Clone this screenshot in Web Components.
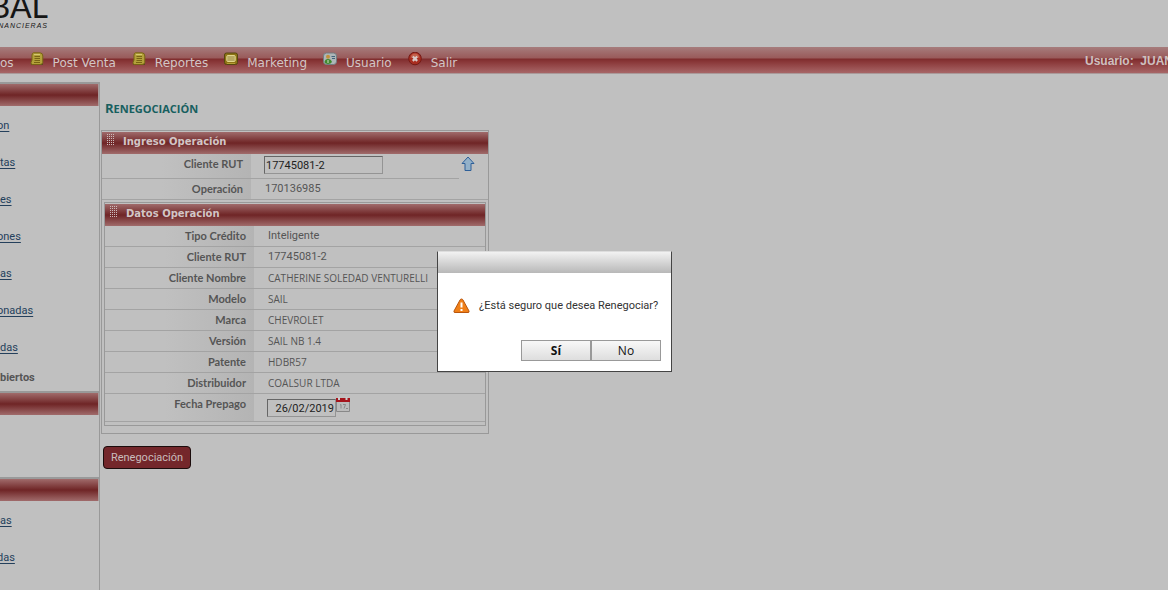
<!DOCTYPE html>
<html lang="es"><head><meta charset="utf-8"><title>Renegociación</title>
<style>
html,body{margin:0;height:100%}
body{background:#c0c0c0;font:11px/16px Roboto,sans-serif;color:#555;overflow:hidden}
</style></head><body>
<credit-app></credit-app>
<script>
const define=(name,html)=>customElements.define(name,class extends HTMLElement{
  connectedCallback(){
    if(this.shadowRoot)return;
    const root=this.attachShadow({mode:'open'});
    root.innerHTML=typeof html==='function'?html(this):html;
  }
});

const icons={
  note:`<rect x="1" y="10" width="12" height="3" rx="1" fill="#4b4520"/><path d="M3.500 .8H10Q12.800 1 12.800 4V10.500Q12.500 12.500 10 12.500H2.500Q.6 12.500 1 10.500L2 8V3Q2.200 1 3.500 .8Z" fill="#b3a13a" stroke="#786414"/><path d="M4.500 4.500H10M4.500 6.500H10M4.500 8.500H10M4 10.500H10" stroke="#786414"/><path d="M4 2.500H10" stroke="#d5c971"/>`,
  screen:`<rect x=".5" y="1" width="13" height="11.500" rx="2" fill="#8d7414" stroke="#564610"/><rect x="2.800" y="3.500" width="8.400" height="6" rx="1" fill="#b7a860" stroke="#e1d58d"/><path d="M3 11.500H11" stroke="#b59e34"/>`,
  user:`<rect x=".5" y="1" width="13" height="11.500" rx="3" fill="#aeb6b8" stroke="#737d80"/><circle cx="5" cy="4.800" r="2" fill="#c2913c"/><path d="M1.500 10Q2 7 5 7T9 10Q8 12 5 12T1.500 10Z" fill="#3f8a2d"/><path d="M8.500 4.500H12M9 6.500H12" stroke="#40627a"/><path d="M5 8V11" stroke="#d4dccd"/>`,
  exit:`<circle cx="7" cy="6.500" r="6.300" fill="#a92d20" stroke="#741b16"/><path d="M2.500 6Q3 1.500 7 1.500T11.500 6Q7 4 2.500 6Z" fill="#c4614c"/><path d="M4.800 4.500L9.200 8.900M9.200 4.500L4.800 8.900" stroke="#d9c9c7" stroke-width="2.200"/>`
};
define('nav-item',e=>`<style>
:host{display:flex;gap:9px;height:26px}
svg{width:14px;height:14px;margin-top:5px;flex:none}
a{color:#d2c6c6;text-decoration:none;font:12px/32px "DejaVu Sans",sans-serif;white-space:nowrap}
</style>${e.hasAttribute('icon')?`<svg viewBox="0 0 14 14" aria-hidden="true">${icons[e.getAttribute('icon')]}</svg>`:''}<a href="#"><slot></slot></a>`);

define('menu-bar',`<style>
:host{display:flex;justify-content:space-between;height:26px;border-bottom:1px solid #a99;background:linear-gradient(#a67c7c 0,#995a5a 11px,#7f2c2d 12px,#8d3c3d 16px,#a76667 26px);overflow:hidden}
nav{display:flex;gap:16px}
.who{width:83px;flex:none;white-space:pre;font:bold 12px/28px "Liberation Sans",sans-serif;color:#cdc0c0;overflow:hidden}
</style><nav><nav-item>os</nav-item><nav-item icon="note">Post Venta</nav-item><nav-item icon="note">Reportes</nav-item><nav-item icon="screen">Marketing</nav-item><nav-item icon="user">Usuario</nav-item><nav-item icon="exit">Salir</nav-item></nav><div class="who">Usuario:  JUAN</div>`);

define('brand-logo',`<style>
:host{display:flex;flex-direction:column;align-items:flex-end;width:48px;height:47px;overflow:hidden;color:#161616}
b{font:32px/32px Lato,sans-serif;margin-top:-10px}
span{font:italic 7px/8px "Liberation Sans",sans-serif;letter-spacing:1px}
</style><b>BAL</b><span>NANCIERAS</span>`);

define('side-panel',`<style>
:host{display:block;box-sizing:border-box;border-top:2px solid #999;border-right:1px solid #999}
header{height:22px;border-right:1px solid #a99;background:linear-gradient(#a06b6b,#6f2526 50%,#a06b6b)}
.body{display:flex;flex-direction:column;padding-top:12px}
</style><header></header><div class="body"><slot></slot></div>`);
define('side-link',`<style>
:host{display:block;height:37px}
:host([clipped]){text-indent:-3px}
a{color:#24405c;text-underline-offset:2px}
</style><a href="#"><slot></slot></a>`);

define('side-bar',`<style>
:host{display:flex;flex-direction:column;width:100px;flex:none;overflow:hidden}
.a{height:309px}.b{height:86px}.c{flex:1}
strong{margin-top:-7px}
</style>
<side-panel class="a"><side-link clipped>on</side-link><side-link>tas</side-link><side-link>es</side-link><side-link clipped>ones</side-link><side-link>as</side-link><side-link clipped>onadas</side-link><side-link>das</side-link><strong>biertos</strong></side-panel>
<side-panel class="b"></side-panel>
<side-panel class="c"><side-link>as</side-link><side-link clipped>das</side-link></side-panel>`);

define('section-head',`<style>
:host{display:flex;gap:8px;height:22px;padding-left:5px;background:linear-gradient(#a06b6b,#6f2526 50%,#a06b6b)}
i{width:8px;height:12px;margin-top:2px;background:conic-gradient(#cbb 0 25%,transparent 0) -1px 0/2px 2px}
h2{margin:0;font:bold 10px/20px "DejaVu Sans",sans-serif;color:#d2c6c6}
</style><i></i><h2><slot></slot></h2>`);

define('field-row',e=>`<style>
:host{display:flex;height:20px;border-bottom:1px solid #a3a3a3;line-height:20px}
:host([caps]){font-family:"Open Sans",sans-serif;font-size:10px}
.l{width:var(--label,149px);box-sizing:border-box;padding-right:8px;text-align:right;font:bold 11px/20px Lato,sans-serif;flex:none;background:linear-gradient(90deg,transparent 40%,#b4b4b4)}
.v{padding-left:14px;white-space:nowrap;flex:1;display:flex}
</style><span class="l">${e.getAttribute('label')}</span><div class="v"><slot></slot></div>`);

define('text-field',e=>`<style>
:host{display:block;margin-left:-1px}
input{display:block;box-sizing:border-box;width:var(--w);height:18px;border:1px solid #949494;border-top-color:#666;border-left-color:#666;background:transparent;padding:0 1px;font:11px Roboto,sans-serif;color:#222;text-align:inherit;outline:0}
</style><input aria-label="${e.getAttribute('label')}" value="${e.getAttribute('value')}">`);

define('operation-form',`<style>
:host{display:block;flex:1;min-width:0;padding:17px 0 0 1px}
h1{margin:0 0 13px 4px;height:18px;font:bold 11px/18px "Open Sans",sans-serif;text-transform:uppercase;color:#175f5f}
h1::first-letter{font-size:13px}
.outer{width:386px;height:301px;border:1px solid #999;padding-top:1px;display:flex;flex-direction:column;--label:149px}
.inner{margin:2px 2px 0;border:1px solid #999;padding-top:1px;height:221px}
.search{display:flex;height:25px}
.search field-row{flex:1;height:24px}
.last{height:27px}
.rut{--w:119px;margin-top:2px}
.date{--w:69px;margin-top:5px;text-align:right}
.up{width:14px;height:16px;margin:2px 13px 0 2px}
.cal{width:14px;height:15px;margin-top:3px}
button{display:block;margin:12px 0 0 2px;width:88px;height:23px;padding:0;border:1px solid #1b0c0c;border-radius:4px;background:#74272b;color:#c8bdbd;font:11px/18px Roboto,sans-serif}
</style>
<h1>Renegociación</h1>
<div class="outer"><section-head>Ingreso Operación</section-head>
<div class="search"><field-row label="Cliente RUT"><text-field class="rut" label="Cliente RUT" value="17745081-2"></text-field></field-row><svg class="up" viewBox="0 0 14 16"><path d="M7 1L13 7.500H10V14.500H4V7.500H1Z" fill="#93b1c9" stroke="#2e5f98" stroke-linejoin="round"/></svg></div>
<field-row label="Operación">170136985</field-row>
<div class="inner"><section-head>Datos Operación</section-head>
<field-row label="Tipo Crédito">Inteligente</field-row>
<field-row label="Cliente RUT">17745081-2</field-row>
<field-row caps label="Cliente Nombre">CATHERINE SOLEDAD VENTURELLI</field-row>
<field-row caps label="Modelo">SAIL</field-row>
<field-row caps label="Marca">CHEVROLET</field-row>
<field-row caps label="Versión">SAIL NB 1.4</field-row>
<field-row caps label="Patente">HDBR57</field-row>
<field-row caps label="Distribuidor">COALSUR LTDA</field-row>
<field-row class="last" label="Fecha Prepago"><text-field class="date" label="Fecha Prepago" value="26/02/2019"></text-field><svg class="cal" viewBox="0 0 14 15"><path d="M.5 1V14.500H13.500V1" fill="#bbb" stroke="#888"/><path d="M0 1H14V5H0Z" fill="#a5141c"/><path d="M3 0V3M10.500 0V3" stroke="#ccc" stroke-width="2"/><path d="M4 8L5 7.500V11.500M7 7.500H9.500L8 11.500M10 11.500h2" stroke="#888" fill="none"/></svg></field-row>
</div></div>
<button>Renegociación</button>`);

define('confirm-dialog',`<style>
:host{position:absolute;left:437px;top:251px;width:235px;height:121px;box-sizing:border-box;background:#fff;border:1px solid #444;border-top-color:#ddd;display:flex;flex-direction:column}
header{height:21px;background:linear-gradient(#f2f2f2,#b8b8b8)}
.msg{display:flex;gap:9px;align-items:center;padding:25px 0 0 15px;color:#333;white-space:nowrap}
svg{width:17px;height:16px;flex:none}
footer{display:flex;margin:26px 10px 0 auto}
button{width:70px;height:21px;border:1px solid #999;background:linear-gradient(#f8f8f8,#dedede);padding:0;font:12px/18px "Open Sans",sans-serif;color:#111}
.y{font-weight:bold}
</style><header></header><div class="msg"><svg viewBox="0 0 17 16"><path d="M8.500 1Q9.500 1 10 2L16 13Q16.500 14.500 15 14.500H2Q.5 14.500 1 13L7 2Q7.500 1 8.500 1Z" fill="#f08018" stroke="#b9550c"/><path d="M8.500 4.500V9.500M8.500 11V13" stroke="#fff" stroke-width="2"/></svg><span>¿Está seguro que desea Renegociar?</span></div><footer><button class="y">Sí</button><button>No</button></footer>`);

define('credit-app',`<style>
:host{display:flex;flex-direction:column;height:100%}
main{display:flex;flex:1;margin-top:8px}
</style><brand-logo></brand-logo><menu-bar></menu-bar><main><side-bar></side-bar><operation-form></operation-form></main><confirm-dialog role="dialog" aria-modal="true" aria-label="Confirmación"></confirm-dialog>`);
</script></body></html>
